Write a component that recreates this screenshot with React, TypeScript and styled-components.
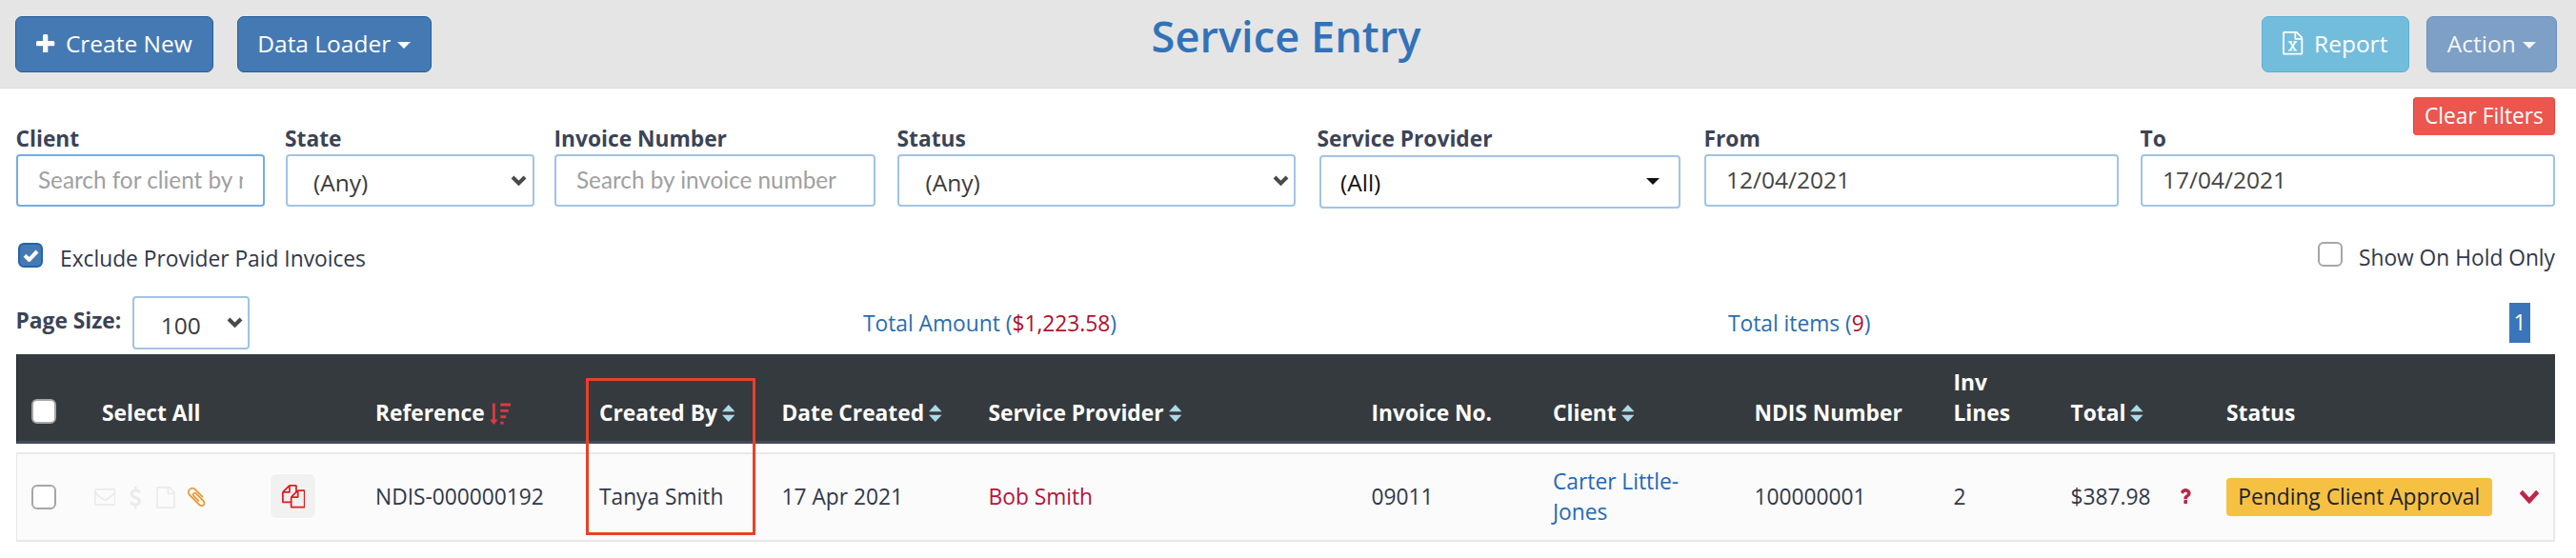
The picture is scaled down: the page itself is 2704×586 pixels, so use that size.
import React from 'react';
import styled, { createGlobalStyle } from 'styled-components';

const GlobalStyle = createGlobalStyle`
  * { box-sizing: border-box; }
  body { margin: 0; background: #fff; }
  body, input, button {
    font-family: "Open Sans", "Noto Sans", sans-serif;
    font-size: 22.75px;
    color: #30384a;
  }
`;

/* ---------- icons ---------- */

const Svg = styled.svg`
  display: block;
  flex: none;
  fill: currentColor;
`;

const PlusIcon = () => (
  <Svg width="19.3" height="19.3" viewBox="192 128 1408 1408">
    <path d="M1600 736v192q0 40-28 68t-68 28h-416v416q0 40-28 68t-68 28h-192q-40 0-68-28t-28-68v-416h-416q-40 0-68-28t-28-68v-192q0-40 28-68t68-28h416v-416q0-40 28-68t68-28h192q40 0 68 28t28 68v416h416q40 0 68 28t28 68z" />
  </Svg>
);

const FILE_PATH =
  'M1596 380q28 28 48 76t20 88v1152q0 40-28 68t-68 28h-1344q-40 0-68-28t-28-68v-1600q0-40 28-68t68-28h896q40 0 88 20t76 48zm-444-244v376h376q-10-29-22-41l-313-313q-12-12-41-22zm384 1528v-1024h-416q-40 0-68-28t-28-68v-416h-768v1536h1280z';

const FileIcon = () => (
  <Svg width="20" height="23" viewBox="128 0 1536 1792">
    <path d={FILE_PATH} />
  </Svg>
);

const ExcelIcon = () => (
  <Svg width="21.4" height="24.6" viewBox="128 0 1536 1792">
    <path d={FILE_PATH} />
    <path
      d="M690 800L1090 1440M1100 800L700 1440"
      fill="none"
      stroke="currentColor"
      strokeWidth="125"
    />
    <path
      d="M570 800H850M950 800H1215M560 1450H830M945 1450H1225"
      fill="none"
      stroke="currentColor"
      strokeWidth="105"
    />
  </Svg>
);

const EnvelopeIcon = () => (
  <Svg width="22.7" height="18" viewBox="0 256 1792 1408" preserveAspectRatio="none">
    <path d="M1664 1504v-768q-32 36-69 66-268 206-426 338-51 43-83 67t-86.5 48.5-102.5 24.5h-2q-48 0-102.5-24.5t-86.5-48.5-83-67q-158-132-426-338-37-30-69-66v768q0 13 9.5 22.5t22.5 9.5h1472q13 0 22.5-9.5t9.5-22.5zm0-1051v-24.5l-.5-13-3-12.5-5.5-9-9-7.5-14-2.5h-1472q-13 0-22.5 9.5t-9.5 22.5q0 168 147 284 193 152 401 317 6 5 35 29.5t46 37.5 44.5 31.5 50.5 27.5 43 9h2q20 0 43-9t50.5-27.5 44.5-31.5 46-37.5 35-29.5q208-165 401-317 54-43 100.5-115.5t46.5-131.5zm128-37v1088q0 66-47 113t-113 47h-1472q-66 0-113-47t-47-113v-1088q0-66 47-113t113-47h1472q66 0 113 47t47 113z" />
  </Svg>
);

const DollarIcon = () => (
  <Svg width="12.2" height="23" viewBox="420 0 945 1792">
    <path d="M1362 1185q0 153-99.5 263.5t-258.5 136.5v175q0 14-9 23t-23 9h-135q-13 0-22.5-9.5t-9.5-22.5v-175q-66-9-127.5-31t-101.5-44.5-74-48-46.5-37.5-17.5-18q-17-21-2-41l103-135q7-10 23-12 15-2 24 9l2 2q113 99 243 125 37 8 74 8 81 0 142.5-43t61.5-122q0-28-15-53t-33.5-42-58.5-37.5-66-32-80-32.5q-39-16-61.5-25t-61.5-26.5-62.5-31-56.5-35.5-53.5-42.5-43.5-49-35.5-58-21-66.5-8.5-78q0-138 98-242t255-134v-180q0-13 9.5-22.5t22.5-9.5h135q14 0 23 9t9 23v176q57 6 110.5 23t87 33.5 63.5 37.5 39 29 15 14q17 18 5 38l-81 146q-8 15-23 16-14 3-27-7-3-3-14.5-12t-39-26.5-58.5-32-74.5-26-85.5-11.5q-95 0-155 43t-60 111q0 26 8.5 48t29.5 41.5 39.5 33 56 31 60.5 27 70 27.5q53 20 81 31.5t76 35 75.5 42.5 62 50 53 63.5 31.5 76.5 13 94z" />
  </Svg>
);

const PaperclipIcon = () => (
  <Svg width="18.3" height="20" viewBox="196 132 1400 1528" preserveAspectRatio="none">
    <path d="M1596 1385q0 117-79 196t-196 79q-135 0-235-100l-777-776q-113-115-113-271 0-159 110-270t269-111q158 0 273 113l605 606q10 10 10 22 0 16-30.5 46.5t-46.5 30.5q-13 0-23-10l-606-607q-79-77-181-77-106 0-179 75t-73 181q0 105 76 181l776 777q63 63 145 63 64 0 106-42t42-106q0-82-63-145l-581-581q-26-24-60-24-29 0-48 19t-19 48q0 32 25 59l410 410q10 10 10 22 0 16-31 47t-47 31q-12 0-22-10l-410-410q-63-61-63-149 0-82 57-139t139-57q88 0 149 63l581 581q100 98 100 235z" />
  </Svg>
);

const CopyIcon = () => (
  <Svg width="24.6" height="24.6" viewBox="0 0 1792 1792">
    <path d="M1696 384q40 0 68 28t28 68v1216q0 40-28 68t-68 28h-960q-40 0-68-28t-28-68v-288h-544q-40 0-68-28t-28-68v-672q0-40 20-88t48-76l408-408q28-28 76-48t88-20h416q40 0 68 28t28 68v328q68-40 128-40h416zm-544 213l-299 299h299v-299zm-640-384l-299 299h299v-299zm196 647l316-316v-416h-384v416q0 40-28 68t-68 28h-416v640h512v-256q0-40 20-88t48-76zm956 804v-1152h-384v416q0 40-28 68t-68 28h-416v640h896z" />
  </Svg>
);

const QuestionIcon = () => (
  <Svg width="11.6" height="16" viewBox="386 256 1018 1280" preserveAspectRatio="none">
    <path d="M1088 1256v240q0 16-12 28t-28 12h-240q-16 0-28-12t-12-28v-240q0-16 12-28t28-12h240q16 0 28 12t12 28zm316-600q0 54-15.5 101t-35 76.5-55 59.5-57.5 43.5-61 35.5q-41 23-68.5 65t-27.5 67q0 17-12 32.5t-28 15.5h-240q-15 0-25.5-18.5t-10.5-37.5v-45q0-83 65-156.5t143-108.5q59-27 84-56t25-76q0-42-46.5-74t-107.5-32q-65 0-108 29-35 25-107 115-13 16-31 16-12 0-25-8l-164-125q-13-10-15.5-25t5.5-28q160-266 464-266 80 0 161 31t146 83 106 127.5 41 158.5z" />
  </Svg>
);

const ChevronDownIcon = () => (
  <Svg width="20" height="14" viewBox="90 533 1612 1035" preserveAspectRatio="none">
    <path d="M1683 808l-742 741q-19 19-45 19t-45-19l-742-741q-19-19-19-45.5t19-45.5l166-165q19-19 45-19t45 19l531 531 531-531q19-19 45-19t45 19l166 165q19 19 19 45.5t-19 45.5z" />
  </Svg>
);

const SortIcon = () => (
  <Svg width="13.6" height="18" viewBox="0 0 13.6 18">
    <path fill="#add8e6" d="M6.8 0L13.6 7.3H0ZM0 10.7H13.6L6.8 18Z" />
  </Svg>
);

const SortDescIcon = () => (
  <Svg width="22.5" height="23" viewBox="0 0 22.5 23">
    <path
      fill="#dc3a41"
      d="M3 0.5H5.8V17.5H8.6L4.4 23L0 17.5H3ZM11.3 0.5H22.5V3.4H11.3ZM11.3 6.9H19.8V9.8H11.3ZM11.3 13.3H17.3V16.2H11.3ZM11.3 19.7H14.6V22.6H11.3Z"
    />
  </Svg>
);

const SelectArrow = () => (
  <Svg width="17" height="11" viewBox="0 0 17 11">
    <path d="M2 2L8.5 8.5L15 2" fill="none" stroke="#4a4a4a" strokeWidth="4" />
  </Svg>
);

const CheckIcon = () => (
  <Svg width="17" height="13" viewBox="0 0 17 13">
    <path d="M2 6.3L6.6 10.8L15 2" fill="none" stroke="#fff" strokeWidth="4" />
  </Svg>
);

const Caret = styled.span`
  width: 0;
  height: 0;
  border: 7px solid transparent;
  border-top: 7.5px solid currentColor;
  border-bottom: 0;
`;

/* ---------- top bar ---------- */

const TopBar = styled.header`
  display: grid;
  grid-template-columns: 1fr auto 1fr;
  height: 93px;
  padding: 17px 20px 0 16px;
  background: #e5e5e5;
  border-bottom: 1px solid #dcdcdc;
`;

const ButtonGroup = styled.div<{ $gap: number; $end?: boolean }>`
  display: flex;
  align-items: flex-start;
  gap: ${(p) => p.$gap}px;
  justify-content: ${(p) => (p.$end ? 'flex-end' : 'flex-start')};
`;

const tones = {
  primary: ['#4579b3', '#1f5f9f', '#fff'],
  info: ['#73bddc', '#58b0d5', '#fff'],
  muted: ['#7e9fc6', '#6a90bf', '#f3f6fa'],
};

const Button = styled.button<{ $tone: keyof typeof tones; $width: number; $gap: number }>`
  display: flex;
  align-items: center;
  justify-content: center;
  gap: ${(p) => p.$gap}px;
  width: ${(p) => p.$width}px;
  height: 58.6px;
  padding: 0 0 2px;
  border: 1.5px solid ${(p) => tones[p.$tone][1]};
  border-radius: 7px;
  background: ${(p) => tones[p.$tone][0]};
  color: ${(p) => tones[p.$tone][2]};
  font-size: 24.5px;
  white-space: nowrap;

  ${Caret} { margin-top: 4px; }
`;

const Title = styled.h1`
  margin: 0;
  font-size: 45.2px;
  line-height: 41px;
  font-weight: 600;
  color: #3273b8;
`;

/* ---------- filters ---------- */

const Content = styled.main`
  padding: 9px 22px 0 17px;
`;

const ClearRow = styled.div`
  display: flex;
  justify-content: flex-end;
  margin-bottom: -12px;
`;

const ClearButton = styled.button`
  width: 149px;
  height: 40px;
  padding: 0 0 1px;
  border: 1px solid #e8413a;
  border-width: 0 1px;
  border-radius: 4px;
  background: #eb564e;
  color: #fff;
  line-height: 38px;
  white-space: nowrap;
`;

const Filters = styled.div`
  display: grid;
  grid-template-columns: 282.5px 282.5px 360px 441px 406px 458px 435px;
`;

const Label = styled.label`
  display: block;
  margin-left: -0.5px;
  height: 31.5px;
  line-height: 31.5px;
  font-weight: 700;
  color: #3b4356;
  white-space: nowrap;
`;

const TextInput = styled.input<{ $width: number; $focus?: boolean }>`
  display: block;
  width: ${(p) => p.$width}px;
  height: 55.5px;
  padding: 0 21px 1px;
  border: 2px solid ${(p) => (p.$focus ? '#74ade0' : '#a3c3e4')};
  border-radius: 4px;
  background: #fff;
  color: #444;
  font-size: 24.5px;
  outline: 0;

  &::placeholder {
    color: #a0a0a0;
    font-family: Lato, sans-serif;
    font-size: 24.3px;
    opacity: 1;
  }
`;

const SelectBox = styled.div<{ $width: number; $left?: number; $right?: number }>`
  display: flex;
  align-items: center;
  justify-content: space-between;
  width: ${(p) => p.$width}px;
  height: 55.5px;
  padding: 0 ${(p) => p.$right ?? 5.5}px 0 ${(p) => p.$left ?? 27.5}px;
  border: 2px solid #a3c3e4;
  border-radius: 4px;
  background: #fff;
  color: #3a3a3a;
  font-size: 24.5px;

  span:first-child { padding-top: 4.5px; }
`;

const ProviderSelect = styled(SelectBox)`
  margin: 1.5px 0 0 2px;
  color: #111;

  span:first-child { padding-top: 1.5px; }
`;

const OptionRow = styled.div`
  display: flex;
  justify-content: space-between;
  padding: 34.5px 0 0 2px;
`;

const CheckLabel = styled.label<{ $top: number; $gap: number }>`
  display: flex;
  align-items: flex-start;
  gap: ${(p) => p.$gap}px;
  margin-top: ${(p) => p.$top}px;
  height: 31.5px;
  line-height: 33px;
  white-space: nowrap;
`;

const CheckBox = styled.span<{ $checked?: boolean }>`
  display: flex;
  align-items: center;
  justify-content: center;
  flex: none;
  width: 26px;
  height: 26px;
  border: 2px solid ${(p) => (p.$checked ? '#1f65ad' : '#a6a6a6')};
  border-radius: 6px;
  background: ${(p) => (p.$checked ? '#4579b3' : '#fff')};
`;

/* ---------- summary ---------- */

const Summary = styled.div`
  display: grid;
  grid-template-columns: 889px 908px 1fr auto;
  height: 61px;
  margin-top: 24.5px;
  white-space: nowrap;
`;

const PageSize = styled.div`
  display: flex;
  gap: 12px;

  ${Label} { padding-top: 9.5px; }
`;

const Total = styled.div`
  padding-top: 12.5px;
  line-height: 31.5px;
  color: #2b6cb0;

  b { font-weight: 400; color: #b0102f; }
`;

const PageNumber = styled.span`
  width: 22px;
  height: 42px;
  margin: 7px 26px 0 0;
  background: #3a75b9;
  color: #fff;
  line-height: 42px;
  text-align: center;
`;

/* ---------- table ---------- */

const COLUMNS = '89px 287px 235px 191.5px 217px 402px 190.5px 211.5px 209px 123px 163.5px 1fr';

const TableHead = styled.div`
  display: grid;
  grid-template-columns: ${COLUMNS};
  align-items: end;
  height: 93.5px;
  padding: 0 0 13.5px;
  background: #353a3e;
  border-bottom: 3px solid #434c56;
  border-left: 1px solid #20262e;
`;

const HeadCell = styled.div`
  display: flex;
  align-items: flex-end;
  gap: 5px;
  color: #fff;
  font-weight: 700;
  line-height: 31.5px;
  white-space: nowrap;
  min-width: 0;

  svg { margin-bottom: 6px; }
`;

const DescHeadCell = styled(HeadCell)`
  svg { margin-bottom: 3.5px; }
`;

const HeadCheck = styled.div`
  padding: 0 0 4px 15px;
`;

const TableRow = styled.div`
  display: grid;
  grid-template-columns: ${COLUMNS};
  align-items: center;
  height: 93.5px;
  margin-top: 9.5px;
  padding-top: 1px;
  border: 2px solid #e8e8e8;
  border-left-width: 1px;
  background: #fbfbfb;
`;

const Cell = styled.div<{ $color?: string }>`
  color: ${(p) => p.$color ?? 'inherit'};
  line-height: 32px;
  white-space: nowrap;
`;

const RowCheck = styled.div`
  padding: 0 0 0 15px;
`;

const RowIcons = styled.div`
  display: flex;
  align-items: center;
  margin-left: -8.5px;
  color: #ebebeb;
`;

const IconSlot = styled.span<{ $left: number; $color?: string }>`
  margin-left: ${(p) => p.$left}px;
  color: ${(p) => p.$color ?? 'inherit'};
`;

const CopyButton = styled.span`
  display: flex;
  align-items: center;
  justify-content: center;
  width: 49px;
  height: 48px;
  margin: -2px 0 0 68px;
  border: 1.75px solid #fff;
  border-radius: 7px;
  background: #f1f1f1;
  color: #e01b22;
`;

const TotalCell = styled(Cell)`
  display: flex;
  align-items: center;
  justify-content: space-between;
  padding-right: 37.5px;

  svg { color: #bb2649; margin-bottom: 3px; }
`;

const StatusCell = styled.div`
  display: flex;
  align-items: center;
  justify-content: space-between;
  padding: 0 15px 1px 0;
  color: #bb2649;
`;

const Badge = styled.span`
  width: 278.5px;
  height: 40px;
  border-radius: 4px;
  background: #f6c143;
  color: #1d2230;
  line-height: 39px;
  text-align: center;
  white-space: nowrap;
`;

const TableWrap = styled.section`
  position: relative;
`;

/* Outline laid over the "Created By" column */
const Highlight = styled.div`
  position: absolute;
  left: 598px;
  top: 25px;
  width: 178px;
  height: 164.5px;
  border: 3px solid #ea4128;
`;

const headings: { text: React.ReactNode; sort?: 'both' | 'desc' }[] = [
  { text: 'Select All' },
  { text: 'Reference', sort: 'desc' },
  { text: 'Created By', sort: 'both' },
  { text: 'Date Created', sort: 'both' },
  { text: 'Service Provider', sort: 'both' },
  { text: 'Invoice No.' },
  { text: 'Client', sort: 'both' },
  { text: 'NDIS Number' },
  { text: <>Inv<br />Lines</> },
  { text: 'Total', sort: 'both' },
  { text: 'Status' },
];

export default function App() {
  return (
    <>
      <GlobalStyle />
      <TopBar>
        <ButtonGroup $gap={25}>
          <Button $tone="primary" $width={208} $gap={11.4}>
            <PlusIcon />
            Create New
          </Button>
          <Button $tone="primary" $width={203.5} $gap={7}>
            Data Loader
            <Caret />
          </Button>
        </ButtonGroup>
        <Title>Service Entry</Title>
        <ButtonGroup $gap={18} $end>
          <Button $tone="info" $width={154.5} $gap={11.5}>
            <ExcelIcon />
            Report
          </Button>
          <Button $tone="muted" $width={137.5} $gap={7}>
            Action
            <Caret />
          </Button>
        </ButtonGroup>
      </TopBar>

      <Content>
        <ClearRow>
          <ClearButton>Clear Filters</ClearButton>
        </ClearRow>

        <Filters>
          <div>
            <Label>Client</Label>
            <TextInput $width={261} $focus placeholder="Search for client by name" />
          </div>
          <div>
            <Label>State</Label>
            <SelectBox $width={261}>
              <span>(Any)</span>
              <SelectArrow />
            </SelectBox>
          </div>
          <div>
            <Label>Invoice Number</Label>
            <TextInput $width={337} placeholder="Search by invoice number" />
          </div>
          <div>
            <Label>Status</Label>
            <SelectBox $width={418}>
              <span>(Any)</span>
              <SelectArrow />
            </SelectBox>
          </div>
          <div>
            <Label>Service Provider</Label>
            <ProviderSelect $width={379} $left={20} $right={20}>
              <span>(All)</span>
              <Caret />
            </ProviderSelect>
          </div>
          <div>
            <Label>From</Label>
            <TextInput $width={435} defaultValue="12/04/2021" />
          </div>
          <div>
            <Label>To</Label>
            <TextInput $width={435} defaultValue="17/04/2021" />
          </div>
        </Filters>

        <OptionRow>
          <CheckLabel $top={2} $gap={18}>
            <CheckBox $checked>
              <CheckIcon />
            </CheckBox>
            Exclude Provider Paid Invoices
          </CheckLabel>
          <CheckLabel $top={0.5} $gap={17}>
            <CheckBox />
            Show On Hold Only
          </CheckLabel>
        </OptionRow>

        <Summary>
          <PageSize>
            <Label>Page Size:</Label>
            <SelectBox $width={123}>
              <span>100</span>
              <SelectArrow />
            </SelectBox>
          </PageSize>
          <Total>
            Total Amount (<b>$1,223.58</b>)
          </Total>
          <Total>
            Total items (<b>9</b>)
          </Total>
          <PageNumber>1</PageNumber>
        </Summary>

        <TableWrap>
          <TableHead>
            <HeadCheck>
              <CheckBox />
            </HeadCheck>
            {headings.map((h, i) => {
              const HeadingCell = h.sort === 'desc' ? DescHeadCell : HeadCell;
              return (
                <HeadingCell key={i}>
                  <span>{h.text}</span>
                  {h.sort === 'both' && <SortIcon />}
                  {h.sort === 'desc' && <SortDescIcon />}
                </HeadingCell>
              );
            })}
          </TableHead>
          <TableRow>
            <RowCheck>
              <CheckBox />
            </RowCheck>
            <RowIcons>
              <EnvelopeIcon />
              <IconSlot $left={15}>
                <DollarIcon />
              </IconSlot>
              <IconSlot $left={15.7}>
                <FileIcon />
              </IconSlot>
              <IconSlot $left={13} $color="#e8952c">
                <PaperclipIcon />
              </IconSlot>
              <CopyButton>
                <CopyIcon />
              </CopyButton>
            </RowIcons>
            <Cell>NDIS-000000192</Cell>
            <Cell>Tanya Smith</Cell>
            <Cell>17 Apr 2021</Cell>
            <Cell $color="#b8123a">Bob Smith</Cell>
            <Cell>09011</Cell>
            <Cell $color="#2468b8">
              Carter Little-
              <br />
              Jones
            </Cell>
            <Cell>100000001</Cell>
            <Cell>2</Cell>
            <TotalCell>
              <span>$387.98</span>
              <QuestionIcon />
            </TotalCell>
            <StatusCell>
              <Badge>Pending Client Approval</Badge>
              <ChevronDownIcon />
            </StatusCell>
          </TableRow>
          <Highlight />
        </TableWrap>
      </Content>
    </>
  );
}
